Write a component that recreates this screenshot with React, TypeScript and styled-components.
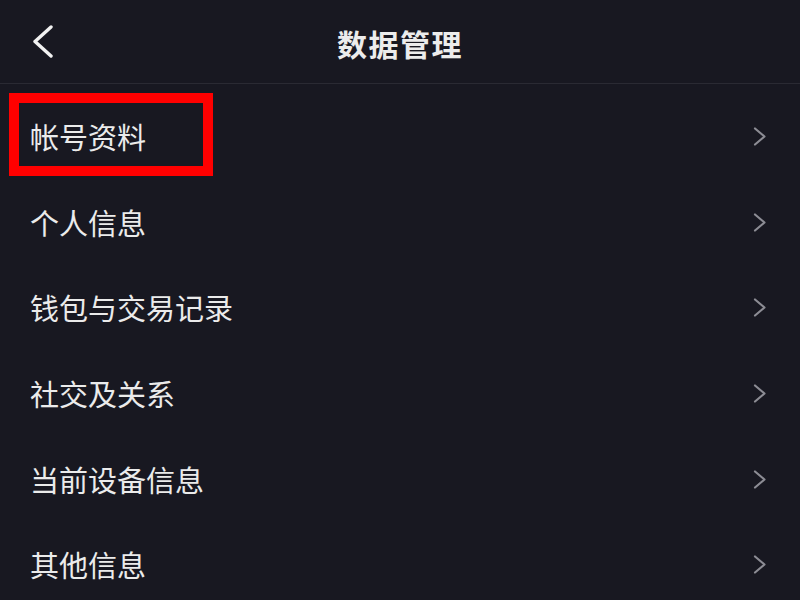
import React from "react";
import styled, { createGlobalStyle } from "styled-components";

const Global = createGlobalStyle`
  html, body { margin: 0; padding: 0; background: #181821; }
  body { font-family: "Noto Sans CJK SC", "Noto Sans", sans-serif; }
`;

const Page = styled.div`
  width: 800px;
  height: 600px;
  overflow: hidden;
  background: #181821;
  display: flex;
  flex-direction: column;
`;

const Header = styled.header`
  height: 84px;
  flex: none;
  display: grid;
  grid-template-columns: 80px 1fr 80px;
  align-items: center;
  border-bottom: 1px solid #2a2a33;
  box-sizing: border-box;
`;

const BackButton = styled.button`
  background: none;
  border: none;
  padding: 0 0 0 31px;
  height: 100%;
  display: flex;
  align-items: center;
  cursor: pointer;
`;

const Title = styled.h1`
  margin: 0;
  padding-top: 2px;
  text-align: center;
  color: #ececec;
  font-size: 30px;
  font-weight: 700;
  line-height: 1;
  letter-spacing: 1.5px;
`;

const List = styled.ul`
  list-style: none;
  margin: 0;
  padding: 10px 0 0;
`;

const Row = styled.li`
  position: relative;
  height: 85.6px;
  display: flex;
  align-items: center;
  justify-content: space-between;
  padding: 0 33px 0 30px;
`;

const Label = styled.span`
  color: #ebebeb;
  font-size: 29px;
  line-height: 1;
`;

const Highlight = styled.div`
  position: absolute;
  left: 9px;
  top: -1px;
  width: 204px;
  height: 83px;
  border: 10px solid #ff0000;
  box-sizing: border-box;
  pointer-events: none;
`;

const items = ["帐号资料", "个人信息", "钱包与交易记录", "社交及关系", "当前设备信息", "其他信息"];

const Chevron = () => (
  <svg width="14" height="19" viewBox="0 0 14 19" fill="none">
    <path d="M2 1.5 L11.5 9.5 L2 17.5" stroke="#8c8c94" strokeWidth="2.2" strokeLinecap="round" strokeLinejoin="round" />
  </svg>
);

const BackIcon = () => (
  <svg width="23" height="33" viewBox="0 0 23 33" fill="none">
    <path d="M20 2 L4 16.5 L20 31" stroke="#f2f2f2" strokeWidth="3.4" strokeLinecap="round" strokeLinejoin="round" />
  </svg>
);

export default function App() {
  return (
    <Page>
      <Global />
      <Header>
        <BackButton aria-label="返回">
          <BackIcon />
        </BackButton>
        <Title>数据管理</Title>
        <span />
      </Header>
      <List>
        {items.map((t, i) => (
          <Row key={t}>
            <Label>{t}</Label>
            <Chevron />
            {i === 0 && <Highlight />}
          </Row>
        ))}
      </List>
    </Page>
  );
}
